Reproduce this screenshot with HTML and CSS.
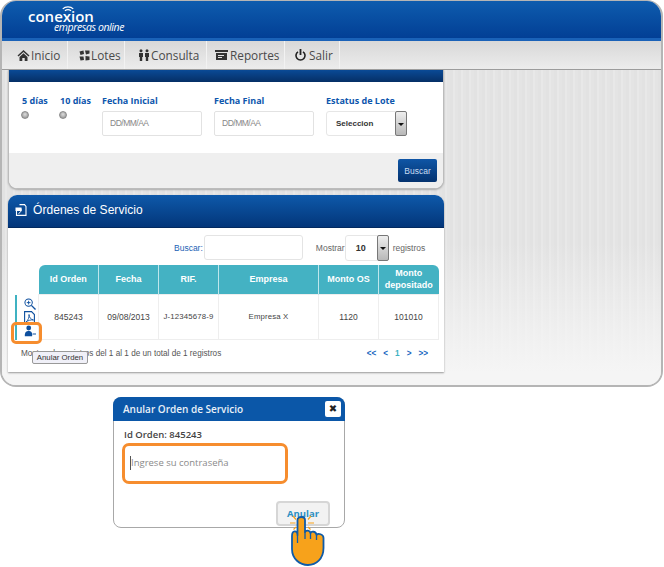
FILE: index.html
```html
<!DOCTYPE html>
<html lang="es">
<head>
<meta charset="utf-8">
<title>Conexión empresas online</title>
<link rel="stylesheet" href="styles.css">
</head>
<body>
<div class="frame">
  <header class="header">
    <div class="logo">
      <svg class="wifi" width="14" height="7" viewBox="0 0 16 8"><path d="M2 4.500C5 1.500 11 1.500 14 4.500M4.500 6.500C6.500 5 9.500 5 11.500 6.500" fill="none" stroke="#fff" stroke-width="1.400"/></svg>
      <div class="logo-name">conexion</div>
      <div class="logo-sub">empresas online</div>
    </div>
  </header>
  <nav class="nav">
    <a class="nav-item"><svg width="13" height="12" viewBox="0 0 13 12"><path d="M6.500 1 0.500 6.500 1.500 7.500 6.500 3 11.500 7.500 12.500 6.500ZM2.500 8V12H5.300V9H7.700V12H10.500V8L6.500 4.300Z" fill="#333"/></svg>Inicio</a>
    <a class="nav-item"><svg width="11" height="11" viewBox="0 0 11 11"><path d="M.5 1.500 4.500.5 5 4 1.500 5ZM6 .5H10.500V3.500L7 4.500ZM.5 6.500H4.500L5 10 1.500 10.500ZM6.500 6 10.500 6.500V10L6.500 10.500Z" fill="#333"/></svg>Lotes</a>
    <a class="nav-item"><svg width="12" height="12" viewBox="0 0 12 12"><circle cx="3" cy="1.800" r="1.500" fill="#333"/><circle cx="9" cy="1.800" r="1.500" fill="#333"/><path d="M1 4H5V8H4.200V12H1.800V8H1ZM7 4H11V8H10.200V12H7.800V8H7Z" fill="#333"/></svg>Consulta</a>
    <a class="nav-item"><svg width="13" height="10" viewBox="0 0 13 10"><path d="M0 0H13V2H0ZM1 3H12V10H1ZM3 5V6H9V5ZM3 7V8H7V7Z" fill="#333" fill-rule="evenodd"/></svg>Reportes</a>
    <a class="nav-item"><svg width="11" height="12" viewBox="0 0 11 12"><path d="M3 2.800A4.500 4.500 0 1 0 8 2.800" fill="none" stroke="#222" stroke-width="1.600"/><path d="M5.500 0V6" stroke="#222" stroke-width="1.800"/></svg>Salir</a>
  </nav>
  <main class="main">
    <section class="panel filter-panel">
      <div class="strip"></div>
      <div class="filters">
        <div class="field field-days"><span class="label">5 días</span><span class="radio"></span></div>
        <div class="field field-days-b"><span class="label">10 días</span><span class="radio"></span></div>
        <div class="field field-date"><span class="label">Fecha Inicial</span><span class="input">DD/MM/AA</span></div>
        <div class="field field-date"><span class="label">Fecha Final</span><span class="input">DD/MM/AA</span></div>
        <div class="field"><span class="label">Estatus de Lote</span>
          <span class="select select-lote"><span class="select-value">Seleccion</span><span class="select-btn"></span></span>
        </div>
      </div>
      <div class="filter-foot"><button class="search-btn">Buscar</button></div>
    </section>
    <section class="panel orders-panel">
      <h2 class="orders-title">
        <svg width="12" height="12" viewBox="0 0 12 12"><path d="M4.500.6H9.500L11 2.400V11.400H1.500V7" fill="none" stroke="#fff" stroke-width="1.100"/><path d="M.5 3.500H6.500V7H.5Z" fill="#fff"/><path d="M3.500 9.500C6 8.500 6.500 6 6.200 4.500" fill="none" stroke="#fff"/></svg>
        Órdenes de Servicio
      </h2>
      <div class="orders-body">
        <div class="toolbar">
          <span class="search-label">Buscar:</span><span class="search-input"></span>
          <span class="muted show-label">Mostrar</span>
          <span class="select select-size"><span class="select-value">10</span><span class="select-btn"></span></span>
          <span class="muted">registros</span>
        </div>
        <div class="table-wrap">
          <div class="actions">
            <svg width="12" height="12" viewBox="0 0 13 13"><circle cx="5" cy="5" r="4" fill="none" stroke="#0d4f9e" stroke-width="1.100"/><path d="M3 5H7M5 3V7" stroke="#0d4f9e"/><path d="M8 8 12.500 12.500" stroke="#0d4f9e" stroke-width="1.500"/></svg>
            <svg width="11" height="13" viewBox="0 0 11 13"><path d="M.6.6H7.500L10.400 3.500V12.400H.6Z" fill="#fff" stroke="#0d4f9e" stroke-width="1.100"/><path d="M2 11C4 9.500 5.500 6 5 3.500 5 6.500 7 8.500 9.500 9 7 8.500 4 9.500 2 11Z" fill="none" stroke="#0d4f9e" stroke-width=".9"/></svg>
            <svg width="12" height="12" viewBox="0 0 14 13"><circle cx="5.500" cy="3" r="2.800" fill="#0d4f9e"/><path d="M1 12.500C.5 8 3 6.500 5.500 6.500S10 8 9.500 12.500Z" fill="#0d4f9e"/><path d="M10 10H14" stroke="#0d4f9e" stroke-width="1.200"/></svg>
            <span class="action-ring"></span>
            <span class="tip">Anular Orden</span>
          </div>
          <table class="orders">
            <thead>
              <tr><th class="c1">Id Orden</th><th class="c2">Fecha</th><th class="c3">RIF.</th><th class="c4">Empresa</th><th class="c5">Monto OS</th><th class="c6">Monto depositado</th></tr>
            </thead>
            <tbody>
              <tr><td>845243</td><td>09/08/2013</td><td class="small">J-12345678-9</td><td class="small">Empresa X</td><td>1120</td><td>101010</td></tr>
            </tbody>
          </table>
        </div>
        <div class="table-foot">
          <span class="info">Mostrando registros del 1 al 1 de un total de 1 registros</span>
          <span class="pager"><b>&lt;&lt;</b><b>&lt;</b><b class="cur">1</b><b>&gt;</b><b>&gt;&gt;</b></span>
        </div>
      </div>
    </section>
  </main>
</div>
<div class="dialog">
  <div class="dialog-head"><span>Anular Orden de Servicio</span><span class="close">✖</span></div>
  <div class="dialog-body">
    <div class="dialog-id">Id Orden: 845243</div>
    <div class="pass"><i class="caret"></i>Ingrese su contraseña</div>
    <div class="dialog-foot"><button class="void-btn">Anular</button></div>
  </div>
  <svg class="hand" width="38" height="52" viewBox="0 0 38 52">
    <path d="M0 8H5.500M18 8H24M3 1 6 4.500M21 1 18 4.500M6 12 3.500 14.500M18 12 20.500 14.500" stroke="#f7a21b" stroke-width="1.200" fill="none"/>
    <path d="M7.500 5C7.500 1 15 1 15 5V17C16 15 20 15 20.500 18 21.500 16 26 16 26.500 20 28 18 33.500 19 33.500 23V33C33.500 44 26 50 18 50S2 44 2 34V21C2 15 7.500 15 7.500 20Z" fill="#f7a21b" stroke="#0f5ba8" stroke-width="1.800" stroke-linejoin="round"/>
    <path d="M7.500 20V28M15 17V24M20.500 18V24M26.500 20V25" stroke="#0f5ba8" stroke-width="1.300" fill="none"/>
  </svg>
</div>
</body>
</html>
```
FILE: styles.css
```css
* { box-sizing: border-box; }
html, body { margin: 0; background: #fff; }
body { width: 664px; height: 567px; overflow: hidden; font-family: "Liberation Sans", Arial, sans-serif; }

.frame {
  width: 663px;
  height: 387px;
  border: 2px solid #b5b5b5;
  border-top-width: 1px;
  border-radius: 16px;
  overflow: hidden;
  background: #f5f5f5;
}

.header {
  height: 40px;
  background: linear-gradient(#0e5cae, #023f95);
  border-bottom: 3px solid #1a62b8;
  padding: 8px 0 0 26px;
}
.logo { position: relative; color: #fff; width: 110px; }
.wifi { position: absolute; left: 33px; top: -4px; }
.logo-name { font: 600 15px/14px "Open Sans", sans-serif; }
.logo-sub { font: italic 400 10.500px/8px "Open Sans", sans-serif; margin: 0 0 0 26px; white-space: nowrap; letter-spacing: -.4px; }

.nav {
  height: 29px;
  display: flex;
  padding-left: 3px;
  background: linear-gradient(#d8d8d8, #ececec);
  border-bottom: 1px solid #9c9c9c;
}
.nav-item {
  display: flex;
  align-items: center;
  font: 400 11.800px "Open Sans", sans-serif;
  color: #4a4a4a;
  border-right: 1px solid #f2f2f2;
  height: 28px;
}
.nav-item svg { flex: none; }
.nav-item:nth-child(1) { width: 63px; padding-left: 12px; gap: 1px; }
.nav-item:nth-child(2) { width: 57px; padding-left: 11px; gap: 1px; }
.nav-item:nth-child(3) { width: 82px; padding-left: 13px; gap: 1px; }
.nav-item:nth-child(4) { width: 78px; padding-left: 8px; gap: 2px; }
.nav-item:nth-child(5) { width: 55px; padding-left: 10px; gap: 3px; }

.main {
  height: 315px;
  padding-left: 6px;
  background:
    linear-gradient(rgba(245,245,245,0) 55%, #f5f5f5 96%),
    repeating-linear-gradient(90deg, #e2e2e2 0 3px, #e8e8e8 3px 5px, #e4e4e4 5px 8px);
}

.panel { width: 436px; background: #fff; }
.filter-panel {
  height: 119px;
  border-radius: 0 0 9px 9px;
  border: 1px solid #bcbcbc;
  border-top: 0;
  overflow: hidden;
  box-shadow: 0 1px 2px #aaa;
}
.strip { height: 12px; background: linear-gradient(#0a4a96, #052f66); }
.filters { height: 71px; display: flex; padding: 13px 0 0 13px; }
.field { display: flex; flex-direction: column; }
.field-days { width: 38px; }
.field-days-b { width: 42px; }
.field-date { width: 112px; }
.label { font: 700 9px/12px "Open Sans", sans-serif; color: #0d56ad; white-space: nowrap; }
.radio { width: 8px; height: 8px; margin: 4px 0 0 -1px; border-radius: 50%; background: radial-gradient(circle at 50% 40%, #ddd, #888); border: 1px solid #8a8a8a; }
.input {
  display: block;
  width: 100px;
  height: 25px;
  margin-top: 4px;
  border: 1px solid #e2e2e2;
  border-radius: 2px;
  font-size: 8.500px;
  letter-spacing: -.5px;
  line-height: 23px;
  padding-left: 7px;
  color: #888;
  background: #fff;
}
.select {
  display: inline-flex;
  position: relative;
  height: 25px;
  border: 1px solid #e6e6e6;
  border-radius: 3px;
  background: #fff;
  font-size: 8px;
  font-weight: 700;
  color: #333;
  align-items: center;
}
.select-lote { width: 81px; margin-top: 4px; padding-left: 9px; }
.select-size { width: 44px; height: 26px; padding-left: 10px; margin-right: 4px; font-size: 9px; }
.select-btn {
  position: absolute;
  right: -1px;
  top: -1px;
  bottom: -1px;
  width: 12px;
  border: 1px solid #777;
  border-radius: 2px;
  background: linear-gradient(#eee, #b8b8b8);
}
.select-btn::after {
  content: "";
  position: absolute;
  left: 2px;
  top: 11px;
  border: 3px solid transparent;
  border-top-color: #111;
}

.filter-foot {
  height: 36px;
  display: flex;
  justify-content: flex-end;
  padding: 6px 6px 0 0;
  background: #efefef;
}
.search-btn {
  width: 39px;
  height: 23px;
  padding: 0;
  border: 0;
  border-radius: 2px;
  background: linear-gradient(#0f56a6, #04326f);
  color: #c9dcf2;
  font: 400 8.500px "Liberation Sans", sans-serif;
}

.orders-panel {
  margin-top: 6px;
  height: 177px;
  border-radius: 9px 9px 0 0;
  box-shadow: 0 1px 2px #999;
}
.orders-title {
  margin: 0;
  height: 33px;
  display: flex;
  align-items: center;
  gap: 6px;
  padding: 0 0 3px 7px;
  border-radius: 9px 9px 0 0;
  background: linear-gradient(#0e59aa, #03367a);
  border-bottom: 1px solid #022a60;
  color: #fff;
  font: 400 12px "Liberation Sans", sans-serif;
  letter-spacing: .05px;
}
.orders-body { padding: 7px 6px 0 7px; }
.toolbar { display: flex; align-items: center; height: 25px; padding-left: 159px; font-size: 8.500px; }
.search-label { color: #1c5fb5; margin-right: 1px; }
.search-input { width: 99px; height: 25px; border: 1px solid #e4e4e4; border-radius: 3px; background: #fff; }
.muted { color: #666; }
.show-label { margin: 0 0 0 13px; }

.table-wrap { position: relative; margin-top: 5px; padding-left: 23px; }
.actions {
  position: absolute;
  left: 0;
  top: 30px;
  width: 23px;
  height: 45px;
  border-left: 2px solid #3fb2c2;
  display: flex;
  flex-direction: column;
  align-items: center;
  padding: 3px 0 0 4px;
}
.actions svg { flex: none; margin-bottom: 1px; }
.action-ring {
  position: absolute;
  left: -6px;
  top: 27px;
  width: 31px;
  height: 22px;
  border: 3px solid #f68d2e;
  border-radius: 5px;
}
.tip {
  position: absolute;
  left: 15px;
  top: 56px;
  width: 56px;
  height: 13px;
  border: 1px solid #999;
  border-radius: 2px;
  background: #f0f0f8;
  font-size: 7.800px;
  line-height: 12px;
  text-align: center;
  color: #333;
  white-space: nowrap;
  z-index: 2;
}
.orders { border-collapse: collapse; width: 400px; table-layout: fixed; font-size: 8.500px; }
.orders th {
  height: 29px;
  background: #44b2c3;
  color: #fff;
  font-size: 9px;
  line-height: 11.500px;
  padding: 1px 4px 0;
  border-right: 1px solid #bfe6ec;
}
.orders th:first-child { border-radius: 6px 0 0 0; }
.orders th:last-child { border-radius: 0 6px 0 0; border-right: 0; }
.c1, .c2, .c3, .c5, .c6 { width: 60px; }
.c4 { width: 100px; }
.orders td {
  height: 45px;
  text-align: center;
  color: #444;
  border: 1px solid #eee;
  font-size: 8.500px;
}
.orders td.small { font-size: 7.800px; letter-spacing: .15px; }
.table-foot { display: flex; justify-content: space-between; padding: 9px 10px 0 6px; font-size: 8.200px; color: #555; }
.pager { display: flex; gap: 7px; color: #1565c0; }
.pager .cur { color: #3fb2c2; }

.dialog {
  position: relative;
  width: 232px;
  height: 131px;
  margin: 10px 0 0 113px;
  border: 1px solid #a8a8a8;
  border-radius: 8px;
  background: #fff;
}
.dialog-head {
  height: 24px;
  margin: -1px -1px 0;
  display: flex;
  justify-content: space-between;
  align-items: center;
  padding: 0 4px 0 10px;
  border-radius: 8px 8px 0 0;
  background: #0b57a8;
  color: #e8f0f8;
  font: 600 10px "Open Sans", sans-serif;
}
.close {
  width: 16px;
  height: 16px;
  border-radius: 2px;
  background: #fff;
  color: #222;
  text-align: center;
  font: 700 10px/16px "DejaVu Sans", sans-serif;
}
.dialog-body { padding: 7px 9px 0 10px; }
.dialog-id { font: 600 9.500px/14px "Open Sans", sans-serif; color: #444; }
.pass {
  position: relative;
  width: 166px;
  height: 41px;
  margin: 1px 0 0 -2px;
  border: 3px solid #f68d2e;
  border-radius: 7px;
  padding-left: 6px;
  font: 400 9.500px/33px "Open Sans", sans-serif;
  color: #8a8a8a;
  background: #fff;
}
.caret { position: absolute; left: 5px; top: 10px; width: 1px; height: 14px; background: #555; }
.dialog-foot { display: flex; justify-content: flex-end; margin-top: 17px; padding-right: 5px; }
.void-btn {
  width: 54px;
  height: 25px;
  padding: 0;
  border: 2px solid #d6d6d6;
  border-radius: 4px;
  background: #f2f2f2;
  color: #2b8fc2;
  font: 700 9.500px "Open Sans", sans-serif;
}
.hand { position: absolute; left: 176px; top: 117px; }
```
